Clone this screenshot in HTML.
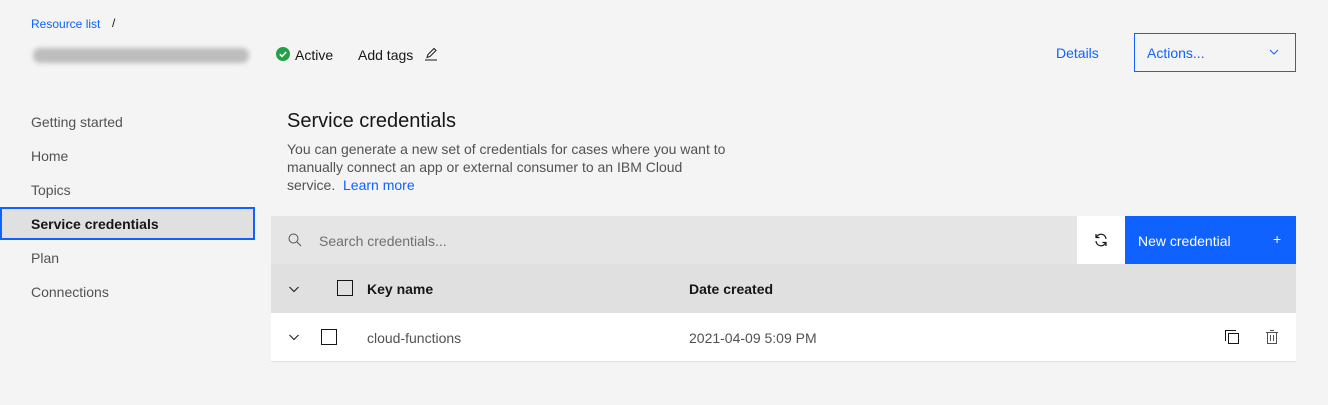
<!DOCTYPE html>
<html><head><style>
*{box-sizing:border-box;margin:0;padding:0}
body{width:1328px;height:405px;background:#f4f4f4;font-family:"Liberation Sans",sans-serif;color:#161616;position:relative;overflow:hidden}
.a{position:absolute;white-space:nowrap}
.nav{font-size:14px;color:#525252;left:31px}
.cb{position:absolute;width:16px;height:16px;border:1px solid #161616;background:transparent}
</style></head><body>
<div class="a" style="left:31px;top:17px;font-size:12px;color:#0f62fe">Resource list</div>
<div class="a" style="left:112px;top:16px;font-size:12px;color:#161616">/</div>
<div class="a" style="left:33px;top:48px;width:216px;height:15px;border-radius:7px;background:#bdbdbd;filter:blur(2.5px)"></div>
<svg class="a" style="left:276px;top:47px" width="14" height="14" viewBox="0 0 14 14"><circle cx="7" cy="7" r="7" fill="#24a148"/><path d="M3.8 7.2l2.2 2.2 4.2-4.4" stroke="#fff" stroke-width="1.6" fill="none"/></svg>
<div class="a" style="left:295px;top:47px;font-size:14px">Active</div>
<div class="a" style="left:358px;top:47px;font-size:14px">Add tags</div>
<svg class="a" style="left:423px;top:46px" width="16" height="16" viewBox="0 0 16 16"><path d="M2 14h12M4 11.5l1-3 6-6 2 2-6 6z" stroke="#161616" stroke-width="1" fill="none"/></svg>
<div class="a" style="left:1056px;top:45px;font-size:14px;color:#0f62fe">Details</div>
<div class="a" style="left:1134px;top:33px;width:162px;height:39px;border:1px solid #0f62fe"></div>
<div class="a" style="left:1147px;top:45px;font-size:14px;color:#0f62fe">Actions...</div>
<svg class="a" style="left:1268px;top:46px" width="12" height="12" viewBox="0 0 12 12"><path d="M2 4l4 4 4-4" stroke="#0f62fe" fill="none"/></svg>

<div class="a nav" style="top:114px">Getting started</div>
<div class="a nav" style="top:148px">Home</div>
<div class="a nav" style="top:182px">Topics</div>
<div class="a" style="left:0;top:207px;width:255px;height:33px;background:#e0e0e0;border:2px solid #0f62fe"></div>
<div class="a" style="left:31px;top:216px;font-size:14px;font-weight:bold">Service credentials</div>
<div class="a nav" style="top:250px">Plan</div>
<div class="a nav" style="top:284px">Connections</div>

<div class="a" style="left:287px;top:110px;font-size:20px">Service credentials</div>
<div class="a" style="left:287px;top:140px;font-size:14px;line-height:18px;color:#525252">You can generate a new set of credentials for cases where you want to<br>manually connect an app or external consumer to an IBM Cloud<br>service.&nbsp; <span style="color:#0f62fe">Learn more</span></div>

<div class="a" style="left:271px;top:216px;width:806px;height:48px;background:#e5e5e5"></div>
<svg class="a" style="left:288px;top:233px" width="14" height="14" viewBox="0 0 14 14"><circle cx="5.5" cy="5.5" r="4.5" stroke="#525252" fill="none"/><path d="M9 9l4 4" stroke="#525252"/></svg>
<div class="a" style="left:319px;top:233px;font-size:14px;color:#6f6f6f">Search credentials...</div>
<div class="a" style="left:1077px;top:216px;width:48px;height:48px;background:#fff"></div>
<svg class="a" style="left:1093px;top:232px" width="16" height="16" viewBox="0 0 16 16"><path d="M13 7A5 5 0 0 0 3.5 5M3 9a5 5 0 0 0 9.5 2" stroke="#161616" stroke-width="1.2" fill="none"/><path d="M3 2v3.5h3.5M13 14v-3.5H9.5" stroke="#161616" stroke-width="1.2" fill="none"/></svg>
<div class="a" style="left:1125px;top:216px;width:171px;height:48px;background:#0f62fe"></div>
<div class="a" style="left:1138px;top:233px;font-size:14px;color:#fff">New credential</div>
<div class="a" style="left:1273px;top:231px;font-size:14px;color:#fff">+</div>

<div class="a" style="left:271px;top:264px;width:1025px;height:49px;background:#e0e0e0"></div>
<svg class="a" style="left:288px;top:283px" width="12" height="12" viewBox="0 0 12 12"><path d="M1.5 4l4.5 4.5 4.5-4.5" stroke="#161616" fill="none"/></svg>
<div class="cb" style="left:337px;top:280px"></div>
<div class="a" style="left:367px;top:281px;font-size:14px;font-weight:bold">Key name</div>
<div class="a" style="left:689px;top:281px;font-size:14px;font-weight:bold">Date created</div>

<div class="a" style="left:271px;top:313px;width:1025px;height:49px;background:#fff;border-bottom:1px solid #e0e0e0"></div>
<svg class="a" style="left:288px;top:331px" width="12" height="12" viewBox="0 0 12 12"><path d="M1.5 4l4.5 4.5 4.5-4.5" stroke="#161616" fill="none"/></svg>
<div class="cb" style="left:321px;top:329px"></div>
<div class="a" style="left:367px;top:330px;font-size:14px;color:#525252">cloud-functions</div>
<div class="a" style="left:689px;top:330px;font-size:14px;color:#525252">2021-04-09 5:09 PM</div>
<svg class="a" style="left:1224px;top:329px" width="16" height="16" viewBox="0 0 16 16"><path d="M1.5 12V1.5H12" stroke="#161616" fill="none"/><rect x="4.5" y="4.5" width="10" height="10" stroke="#161616" fill="none"/></svg>
<svg class="a" style="left:1264px;top:329px" width="16" height="16" viewBox="0 0 16 16"><path d="M2 3.5h12M6 1.5h4M3.5 3.5v11h9v-11M6.5 6v6M9.5 6v6" stroke="#525252" fill="none"/></svg>
</body></html>
